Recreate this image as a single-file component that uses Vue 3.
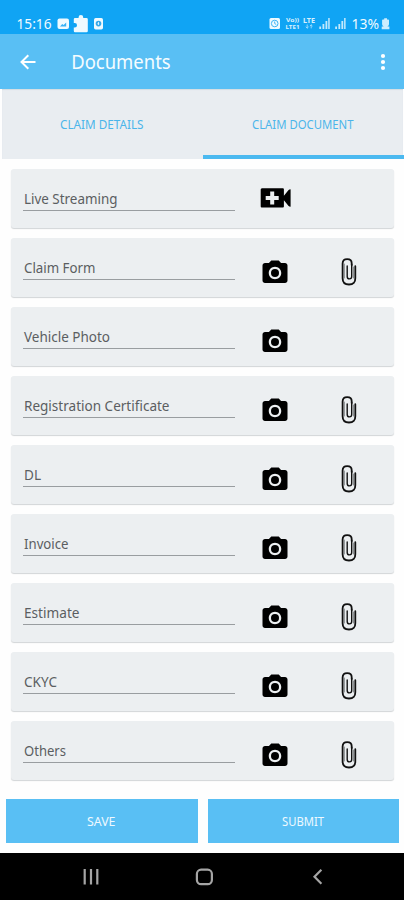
<script setup>
const documents = [
  { name: 'Live Streaming', width: 93.5, video: true },
  { name: 'Claim Form', width: 71.5, clip: true },
  { name: 'Vehicle Photo', width: 86 },
  { name: 'Registration Certificate', width: 145.5, clip: true },
  { name: 'DL', width: 17, clip: true },
  { name: 'Invoice', width: 44.5, clip: true },
  { name: 'Estimate', width: 55.5, clip: true },
  { name: 'CKYC', width: 33, clip: true },
  { name: 'Others', width: 42, clip: true },
]
</script>

<template>
  <div class="screen">
    <div class="status">
      <svg width="404" height="34" viewBox="0 0 404 34">
        <g fill="#effaff">
          <text x="16.5" y="28.7" font-size="14" textLength="35" lengthAdjust="spacingAndGlyphs">15:16</text>
          <rect x="57.5" y="18.5" width="11.5" height="10.5" rx="2" />
          <path d="M59.5 26.5V22M60 26.5l2.2-2.6 1.4 1 2.6-2.4v4z" fill="#38b2f6" />
          <path d="M75 18h3.6v-.8a2.3 2.3 0 0 1 4.6 0v.8h3.3q1.3 0 1.3 1.3V31q0 1.2-1.3 1.2H75q-1.2 0-1.2-1.2v-3.6h1a2.2 2.2 0 0 0 0-4.4h-1v-3.8q0-1.2 1.2-1.2z" />
          <rect x="94" y="18" width="9" height="11.5" rx="1.7" />
          <circle cx="98.5" cy="23.6" r="2.8" fill="#38a9e9" />
          <path d="M98.5 22v3M97.4 23.7h1.8" stroke="#effaff" stroke-width=".8" />
          <rect x="269.5" y="18" width="10.5" height="11" rx="1.5" />
          <circle cx="274.7" cy="23.5" r="3.3" fill="none" stroke="#3eb4f5" stroke-width="1" />
          <path d="M274.7 21.5v2l1.5 1" fill="none" stroke="#3eb4f5" />
          <g font-size="6.5" font-weight="700" opacity=".9">
            <text x="286" y="22.4" font-size="6" textLength="13" lengthAdjust="spacingAndGlyphs">Vo))</text>
            <text x="285.5" y="29.2" font-size="6" textLength="14" lengthAdjust="spacingAndGlyphs">LTE1</text>
            <text x="303" y="22.8" textLength="12" lengthAdjust="spacingAndGlyphs">LTE</text>
          </g>
          <path d="M307.2 24.5v3.7m-1.4-1.4 1.4 1.4 1.4-1.4M311.2 28.4v-3.6m-1.3 1.3 1.3-1.3 1.3 1.3" fill="none" stroke="#b7e3fb" stroke-width=".8" />
          <path d="M319.3 26.5h1.8V29h-1.8zM322.5 24h1.8v5h-1.8zM325.5 21h1.8v8h-1.8zM328.2 18h1.5v11h-1.5z" opacity=".8" />
          <path d="M335.2 26.5h1.8V29h-1.8zM338.4 24h1.8v5h-1.8zM341.4 21h1.8v8h-1.8zM344.1 18h1.5v11h-1.5z" opacity=".8" />
          <text x="351.5" y="28.7" font-size="14" textLength="27.5" lengthAdjust="spacingAndGlyphs">13%</text>
          <path d="M384.2 18.2h2.8v1.2h1.2q.8 0 .8.8v4q0 1.6-1.6 2.2h2v2.8h-7.7v-2.8h2q-1.6-.6-1.6-2.2v-4q0-.8.8-.8h1.3z" opacity=".85" />
        </g>
      </svg>
    </div>

    <header class="appbar">
      <svg class="back" width="18" height="18" viewBox="0 0 18 18">
        <path d="M16.5 9H3M9.3 2.2 2.5 9l6.8 6.8" fill="none" stroke="#fff" stroke-width="2" />
      </svg>
      <h1><svg width="102" height="28"><text x="-.8" y="21.3" textLength="99.5" lengthAdjust="spacingAndGlyphs" fill="#f5fcff">Documents</text></svg></h1>
      <svg width="6" height="18" viewBox="0 0 6 18" fill="#fff">
        <circle cx="3" cy="3" r="2.1" /><circle cx="3" cy="9" r="2.1" /><circle cx="3" cy="15" r="2.1" />
      </svg>
    </header>

    <nav class="tabs">
      <div class="tab">
        <svg width="86" height="18"><text x="0" y="13.7" textLength="83.5" lengthAdjust="spacingAndGlyphs">CLAIM DETAILS</text></svg>
      </div>
      <div class="tab active">
        <svg width="104" height="18"><text x="0" y="13.7" textLength="101.5" lengthAdjust="spacingAndGlyphs">CLAIM DOCUMENT</text></svg>
      </div>
    </nav>

    <main class="list">
      <section v-for="doc in documents" :key="doc.name" class="card">
        <div class="field">
          <svg width="211" height="22">
            <text x="0" y="15.6" :textLength="doc.width" lengthAdjust="spacingAndGlyphs">{{ doc.name }}</text>
          </svg>
        </div>
        <div class="cell">
          <svg v-if="doc.video" class="video" width="32" height="22" viewBox="0 0 32 22">
            <path d="M1.7 1.3h21.2q1 0 1 1v6.5L28.6 3q1.6-1.2 2-.5v17q-.4.7-2-.5l-4.7-5.8v6.2q0 1-1 1H1.7q-1 0-1-1v-17q0-1 1-1z" />
            <path d="M12.2 4.4v13.2M5.7 11h13" stroke="#eceff1" stroke-width="4" />
          </svg>
          <svg v-else class="camera" width="30" height="30" viewBox="0 0 24 24">
            <circle cx="12" cy="12" r="3.2" />
            <path d="M9 2 7.17 4H4c-1.1 0-2 .9-2 2v12c0 1.1.9 2 2 2h16c1.1 0 2-.9 2-2V6c0-1.1-.9-2-2-2h-3.17L15 2H9zm3 15c-2.76 0-5-2.24-5-5s2.24-5 5-5 5 2.24 5 5-2.24 5-5 5z" />
          </svg>
        </div>
        <div class="cell attach">
          <svg v-if="doc.clip" width="16" height="28" viewBox="0 0 16 28">
            <g fill="none" stroke="#111" stroke-linecap="round">
              <path d="M3.4 20V6M12.5 9v11" stroke="#8d9294" stroke-width="1" />
              <path d="M10.7 6.5V18.6q0 2.3-2.2 2.3T6.2 18.6V8" stroke-width="1.4" />
              <path d="M10.7 7V5.2Q10.7 1.2 6.2 1.2T1.6 5.5V20.2Q1.6 26.5 8 26.5T14.3 20.2V8.2" stroke-width="1.8" />
            </g>
          </svg>
        </div>
      </section>
    </main>

    <div class="actions">
      <button type="button"><svg width="30" height="18"><text x="0" y="13.8" textLength="28.5" lengthAdjust="spacingAndGlyphs">SAVE</text></svg></button>
      <button type="button"><svg width="44" height="18"><text x="1" y="13.8" textLength="42" lengthAdjust="spacingAndGlyphs">SUBMIT</text></svg></button>
    </div>

    <footer class="navbar">
      <svg width="404" height="46" viewBox="0 0 404 46" fill="none" stroke="#a5a5a5" stroke-width="2.2">
        <path d="M84.7 16v15.5M91 16v15.5M97.3 16v15.5" />
        <rect x="196.9" y="16.7" width="15" height="14.5" rx="4.2" />
        <path d="m321.4 16.7-6.9 7 6.9 7" />
      </svg>
    </footer>
  </div>
</template>

<style>
body { margin: 0; background: #fefefe; }
</style>

<style scoped>
* { box-sizing: border-box; }
svg { display: block; flex: none; overflow: visible; }
.screen {
  width: 404px;
  height: 900px;
  display: flex;
  flex-direction: column;
  overflow: hidden;
  background: #fefefe;
  font-family: "Noto Sans", sans-serif;
}
.status { height: 34px; background: #10a4f4; }
.appbar {
  height: 55px;
  padding: 0 18px 0 19px;
  display: flex;
  align-items: center;
  background: #59bff4;
}
h1 { margin: 0 auto 0 35px; font-size: 19.5px; font-weight: 400; }
.tabs {
  height: 70px;
  margin: 0 1px 0 2px;
  display: flex;
  background: #e9edf1;
  box-shadow: inset 0 1px 1px #d3dde3;
}
.tab {
  flex: 1;
  display: flex;
  align-items: center;
  justify-content: center;
  font-size: 12.5px;
  fill: #4bb5ea;
}
.active { border-bottom: 4px solid #4bb9f0; padding-top: 4px; margin-right: -1px; }
.list {
  padding: 10px 10px 0 11px;
  display: flex;
  flex-direction: column;
  gap: 10px;
}
.card {
  height: 59px;
  display: flex;
  border-radius: 3px;
  background: #eceff1;
  box-shadow: 0 1px 1px #d2d5d7;
}
.field {
  width: 212px;
  height: 42px;
  margin-left: 12px;
  padding: 19px 0 0 1px;
  border-bottom: 1px solid #999da0;
  font-size: 14px;
  fill: #5b5e61;
}
.cell {
  width: 80px;
  padding-top: 20px;
  display: flex;
  justify-content: center;
}
.video { margin: -2px 0 0 1px; }
.attach { width: 68px; padding-top: 20px; }
.actions {
  margin-top: auto;
  height: 44px;
  padding: 0 5px 0 6px;
  display: grid;
  grid-template-columns: 1fr 1fr;
  gap: 10px;
}
button {
  display: flex;
  align-items: center;
  justify-content: center;
  padding: 0;
  border: 0;
  background: #59bff4;
  font-family: inherit;
  font-size: 12.5px;
  fill: #eef9ff;
}
.navbar { height: 47px; margin-top: 10px; background: #000; }
</style>
